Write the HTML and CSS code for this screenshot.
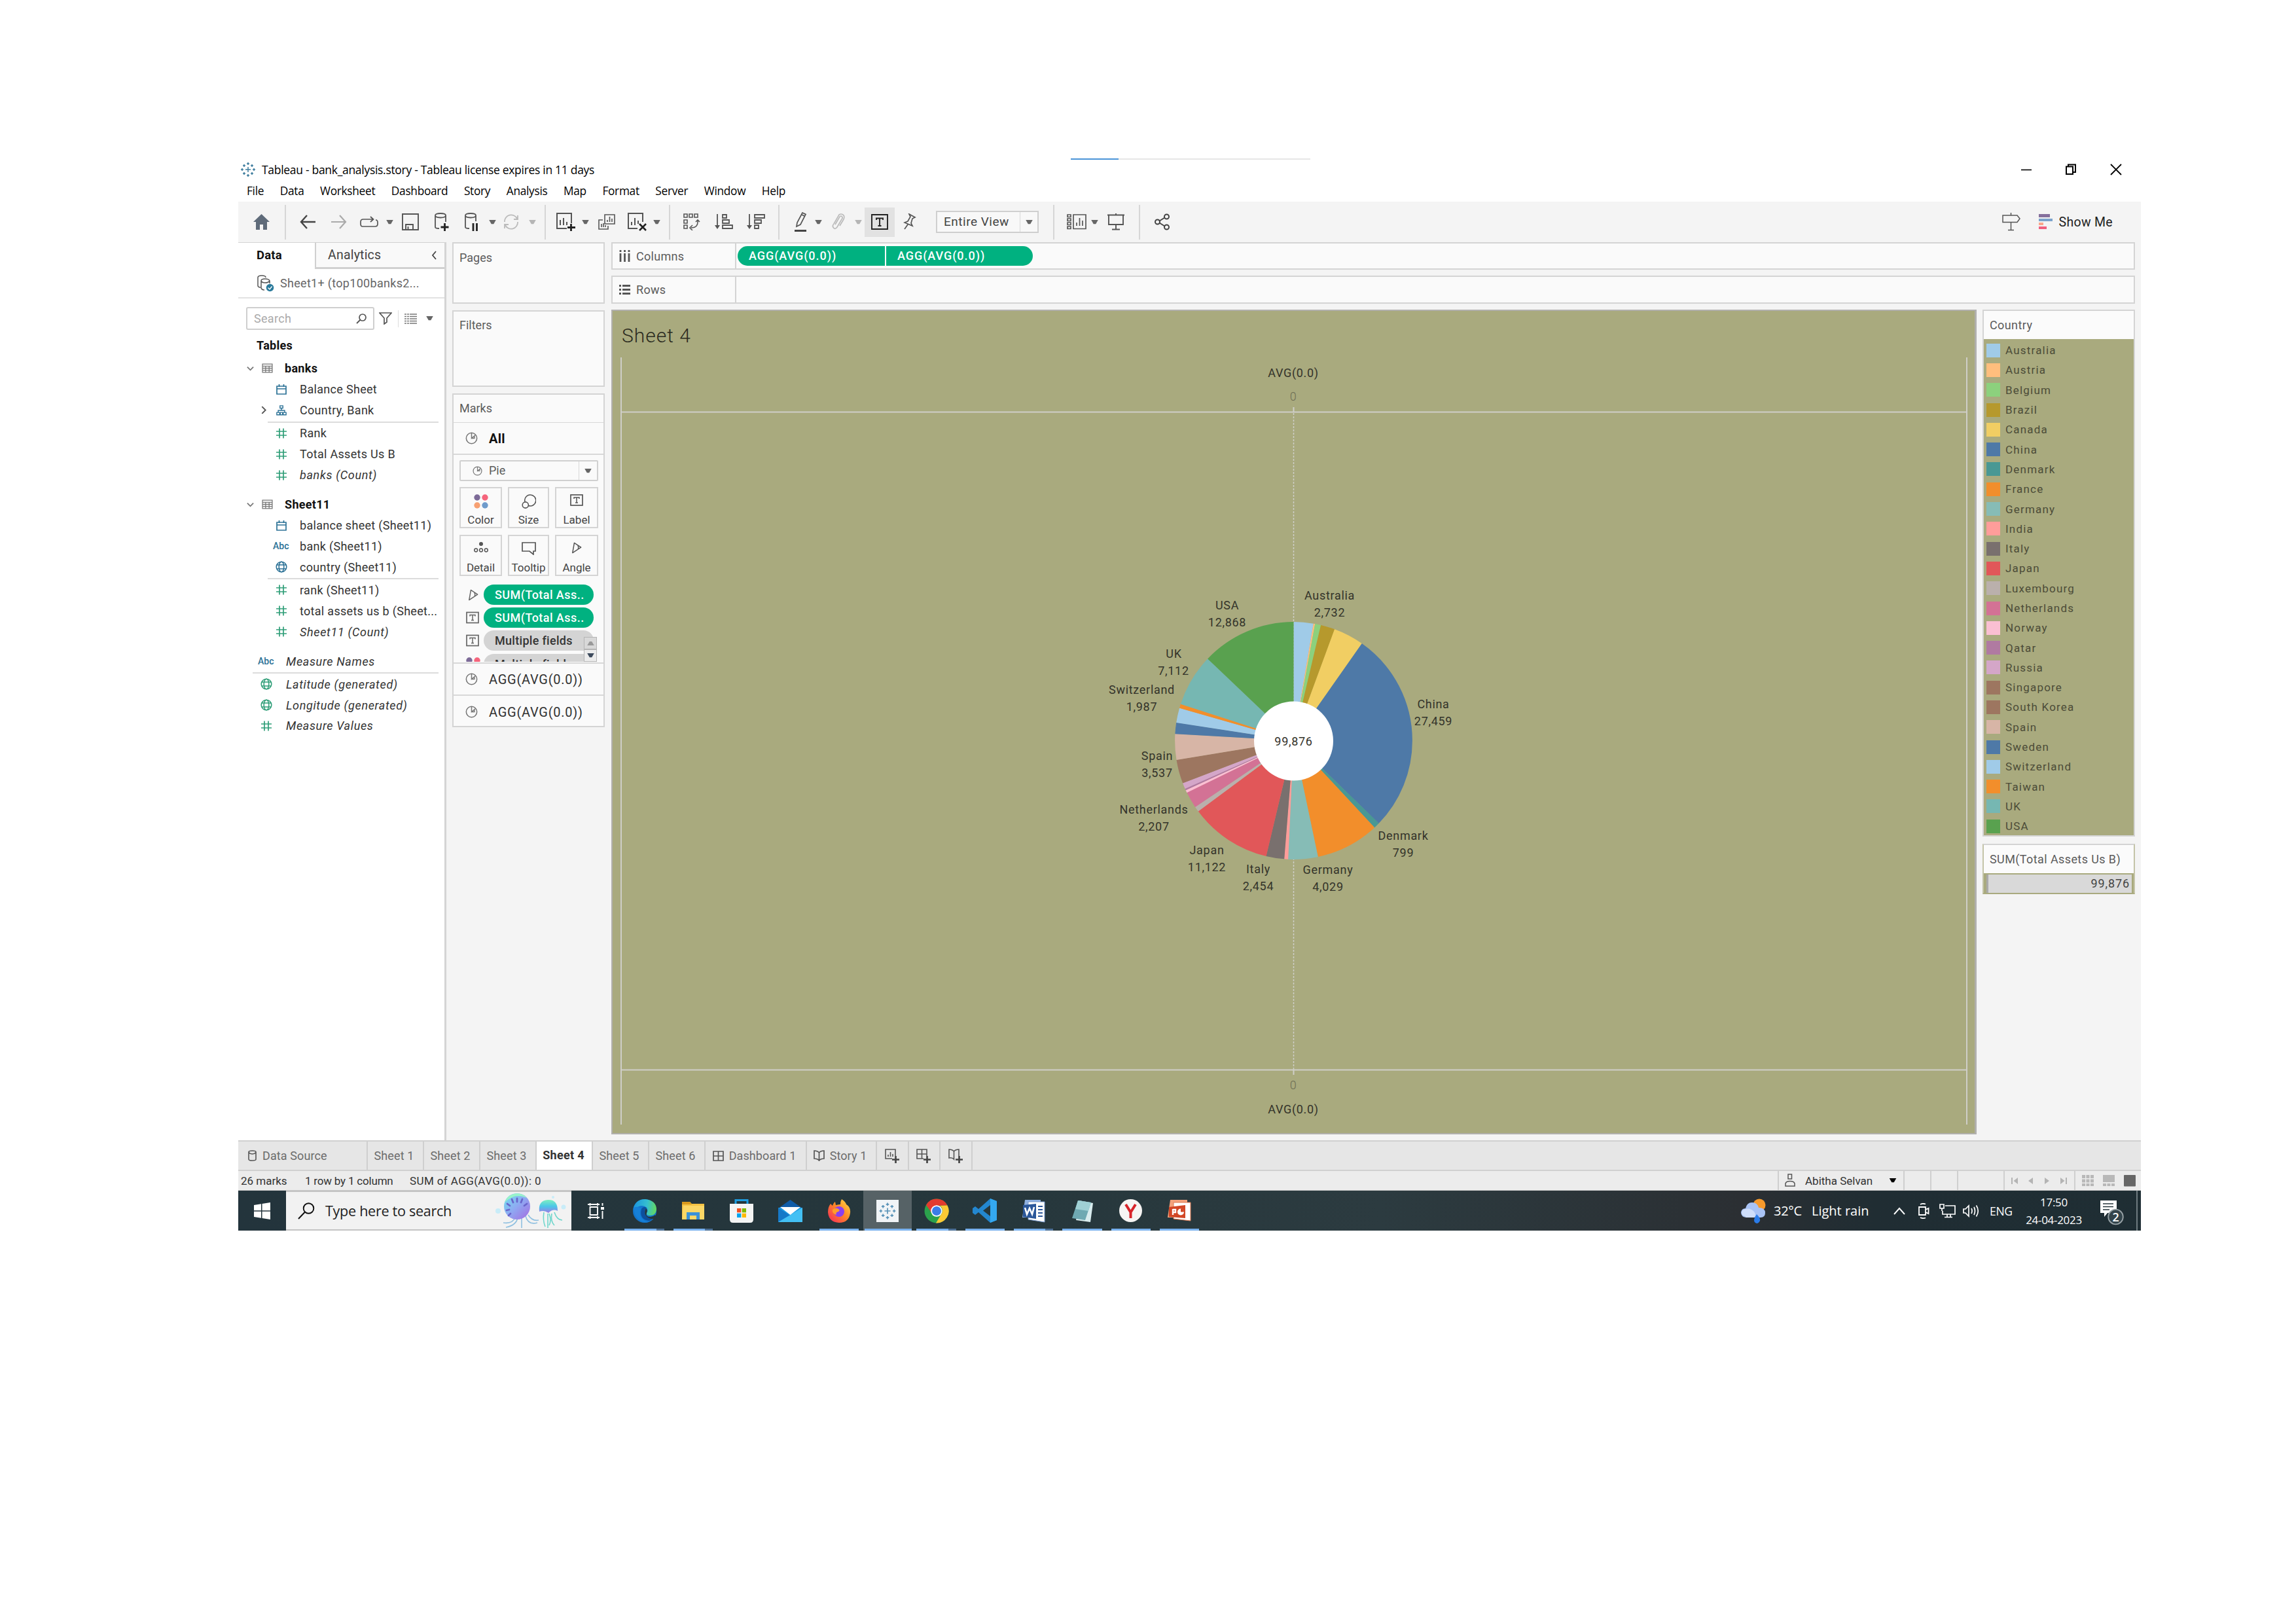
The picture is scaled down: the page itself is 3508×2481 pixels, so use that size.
FILE: index.html
```html
<!DOCTYPE html>
<html lang="en">
<head>
<meta charset="utf-8">
<title>Tableau - bank_analysis.story</title>
<link rel="stylesheet" href="styles.css">
</head>
<body>
<svg class="defs" width="0" height="0">
  <symbol id="caret" viewBox="0 0 12 8"><path d="M0 0H12L8 7H4Z" fill="currentColor"/></symbol>
  <symbol id="pie" viewBox="0 0 20 20"><g fill="none" stroke="currentColor" stroke-width="1.600"><circle cx="10" cy="10" r="8.600"/><path d="M10 1.500V10L16 5M10 10H14.500V6.500"/></g></symbol>
  <symbol id="tbox" viewBox="0 0 20 18"><rect x="1" y="1" width="18" height="16" fill="none" stroke="currentColor" stroke-width="1.700"/><path d="M6 7V5H14V7M10 5V13M8 13H12" fill="none" stroke="currentColor" stroke-width="1.500"/></symbol>
  <symbol id="hash" viewBox="0 0 16 16"><path d="M5 0.500V15.500M11 0.500V15.500M0 5H16M0 11H16" fill="none" stroke="currentColor" stroke-width="1.700"/></symbol>
  <symbol id="cal" viewBox="0 0 16 16"><path d="M1 3H15V15H1ZM1 7H15M4.500 0V4M11.500 0V4" fill="none" stroke="currentColor" stroke-width="1.700"/></symbol>
  <symbol id="globe" viewBox="0 0 18 18"><g fill="none" stroke="currentColor" stroke-width="1.600"><circle cx="9" cy="9" r="7.800"/><ellipse cx="9" cy="9" rx="3.800" ry="7.800"/><path d="M1.500 6H16.500M1.500 12H16.500"/></g></symbol>
  <symbol id="angle" viewBox="0 0 18 20"><path d="M5 1.500L16.500 9L2 18.500Z M11 5.500Q13 9 11.500 12.500" fill="none" stroke="currentColor" stroke-width="1.700" stroke-linejoin="round"/></symbol>
  <symbol id="table" viewBox="0 0 16 14"><path d="M1 1H15V13H1ZM1 4H15M1 7H15M1 10H15M5.500 4V13M10.500 4V13" fill="none" stroke="currentColor" stroke-width="1.200"/></symbol>
  <symbol id="down" viewBox="0 0 12 8"><path d="M1 1.500L6 6.500L11 1.500" fill="none" stroke="currentColor" stroke-width="2"/></symbol>
  <symbol id="plus" viewBox="0 0 10 10"><path d="M5 0V10M0 5H10" stroke="#444" stroke-width="2.400"/></symbol>
  <symbol id="logo" viewBox="0 0 24 24"><path d="M12 8V16M8 12H16M12 1V5M10 3H14M12 19V23M10 21H14M1 12H5M3 10V14M19 12H23M21 10V14M6 4V8M4 6H8M18 4V8M16 6H20M6 16V20M4 18H8M18 16V20M16 18H20" stroke="currentColor" stroke-width="1.500" fill="none"/></symbol>
</svg>
<div class="screen">
  <header class="titlebar">
    <div class="progress"><i></i></div>
    <div class="titlerow">
      <svg class="appicon" viewBox="0 0 24 24"><use href="#logo"/></svg>
      <span class="apptitle">Tableau - bank_analysis.story - Tableau license expires in 11 days</span>
      <svg class="winbtns" viewBox="0 0 154 18"><path d="M0 9.500H16" stroke="#000" stroke-width="1.600"/><path d="M69 4.500H79V16H69ZM72 4V1.500H83V13H79.500" fill="none" stroke="#000" stroke-width="2"/><path d="M137 1L153 17M153 1L137 17" stroke="#000" stroke-width="1.800"/></svg>
    </div>
    <nav class="menu"><span>File</span><span>Data</span><span>Worksheet</span><span>Dashboard</span><span>Story</span><span>Analysis</span><span>Map</span><span>Format</span><span>Server</span><span>Window</span><span>Help</span></nav>
  </header>

  <div class="toolbar">
    <div class="tg tg-home"><svg width="25" height="24" viewBox="0 0 25 24"><path d="M12.500 0L25 12H21V24H15V16H10V24H4V12H0Z" fill="#5f6b7a"/></svg></div>
    <div class="tg tg-nav">
      <svg width="24" height="22" viewBox="0 0 24 22"><path d="M24 11H2M11 1L2 11L11 21" fill="none" stroke="#444" stroke-width="2.400"/></svg>
      <svg width="24" height="22" viewBox="0 0 24 22"><path d="M0 11H22M13 1L22 11L13 21" fill="none" stroke="#aaa" stroke-width="2.200"/></svg>
      <svg width="28" height="18" viewBox="0 0 28 18"><path d="M8 16H4Q1 16 1 12V9Q1 5 5 5H20M16 1L20.500 5L16 9M24 6Q27 6 27 10V12Q27 16 23 16H8" fill="none" stroke="#555" stroke-width="1.700"/></svg>
      <svg class="caret"><use href="#caret"/></svg>
      <svg width="26" height="26" viewBox="0 0 26 26"><path d="M1 1H25V25H1ZM6 25V17H17V25M9.500 25V20" fill="none" stroke="#555" stroke-width="1.900"/></svg>
      <svg width="24" height="28" viewBox="0 0 24 28"><path d="M2 4Q2 1 10 1T18 4V14M2 4V22Q2 24 8 24M2 4Q2 7.500 10 7.500T18 4" fill="none" stroke="#555" stroke-width="1.800"/><path d="M16.500 16V28M10.500 22H22.500" stroke="#222" stroke-width="2.800"/></svg>
      <svg width="24" height="28" viewBox="0 0 24 28"><path d="M2 4Q2 1 10 1T18 4V13M2 4V22Q2 24 8 24M2 4Q2 7.500 10 7.500T18 4" fill="none" stroke="#555" stroke-width="1.800"/><path d="M14 16V28M19.500 16V28" stroke="#222" stroke-width="2.800"/></svg>
      <svg class="caret"><use href="#caret"/></svg>
      <svg width="26" height="24" viewBox="0 0 26 24"><path d="M3 12A10 10 0 0 1 22 7M23 12A10 10 0 0 1 4 17M23 2V8H17M3 22V16H9" fill="none" stroke="#bbb" stroke-width="1.800"/></svg>
      <svg class="caret dim"><use href="#caret"/></svg>
    </div>
    <div class="tg tg-sheet">
      <svg width="29" height="28" viewBox="0 0 29 28"><path d="M16 24H1V1H23V16M6 19V11M11 19V8M16 19V14" fill="none" stroke="#555" stroke-width="2"/><path d="M22.500 17V28M17 22.500H29" stroke="#222" stroke-width="2.800"/></svg>
      <svg class="caret"><use href="#caret"/></svg>
      <svg width="26" height="24" viewBox="0 0 26 24"><path d="M10 1H25V15H10ZM7 9H1V23H15V18M14 12V9M17.500 12V4M21 12V7M5 20V15M8 20V14M11 20V17" fill="none" stroke="#555" stroke-width="1.600"/></svg>
      <svg width="29" height="28" viewBox="0 0 29 28"><path d="M15 24H1V1H23V14M6 19V14M11 19V8M16 17V12" fill="none" stroke="#555" stroke-width="2"/><path d="M18 17L28 27M28 17L18 27" stroke="#222" stroke-width="2.600"/></svg>
      <svg class="caret"><use href="#caret"/></svg>
    </div>
    <div class="tg tg-sort">
      <svg width="26" height="26" viewBox="0 0 26 26"><path d="M1 1H6V6H1ZM9 1H14V6H9ZM17 1H22V6H17ZM1 10H6V15H1ZM1 18H6V23H1ZM22 11Q23 22 12 22M19 13L22 10L25 13M14 18L10 22L14 26" fill="none" stroke="#555" stroke-width="1.600"/></svg>
      <svg width="28" height="24" viewBox="0 0 28 24"><path d="M4 0V20M12 1H18V6H12ZM12 9H22V14H12ZM12 17H27V22H12Z" fill="none" stroke="#555" stroke-width="1.800"/><path d="M0 17H8L4 23Z" fill="#555"/></svg>
      <svg width="28" height="24" viewBox="0 0 28 24"><path d="M4 0V20M12 1H27V6H12ZM12 9H22V14H12ZM12 17H18V22H12Z" fill="none" stroke="#555" stroke-width="1.800"/><path d="M0 17H8L4 23Z" fill="#555"/></svg>
    </div>
    <div class="tg tg-view">
      <svg width="20" height="30" viewBox="0 0 20 30"><path d="M3 22L4 16L12 1L17 3.500L9 19ZM11 4L16 6.500" fill="none" stroke="#555" stroke-width="1.700"/><path d="M0 28.500H18" stroke="#444" stroke-width="3"/></svg>
      <svg class="caret"><use href="#caret"/></svg>
      <svg width="20" height="26" viewBox="0 0 20 26"><path d="M5 17L12 5Q14 3 15.500 5T15 9L8 21Q5 25 2.500 22T3 16L11 2Q14 0 17 2T18 9L12 19" fill="none" stroke="#bbb" stroke-width="1.700"/></svg>
      <svg class="caret dim"><use href="#caret"/></svg>
      <span class="pressed"><svg width="26" height="24" viewBox="0 0 26 24"><path d="M1 1H25V23H1ZM8 9V6.500H18V9M13 6.500V18M10.500 18H15.500" fill="none" stroke="#222" stroke-width="1.900"/></svg></span>
      <svg width="20" height="26" viewBox="0 0 20 26"><path d="M9 1L18 6L14 8L12 15L14 19L2 14L7 12L11 5ZM7 17L2 24" fill="none" stroke="#555" stroke-width="1.700"/></svg>
      <span class="fit"><b>Entire View</b><i><svg class="caret"><use href="#caret"/></svg></i></span>
    </div>
    <div class="tg tg-show">
      <svg width="30" height="24" viewBox="0 0 30 24"><path d="M1 1H6V4.500H1ZM1 7H6V10.500H1ZM1 13H6V16.500H1ZM1 19H6V22.500H1ZM10 1H29V22.500H10ZM15 18V13M19.500 18V6M24 18V10" fill="none" stroke="#555" stroke-width="1.700"/></svg>
      <svg class="caret"><use href="#caret"/></svg>
      <svg width="26" height="26" viewBox="0 0 26 26"><path d="M0 2.500H26M2 3V17H24V3M13 17V24M7 24.500H19M13 0V3" fill="none" stroke="#555" stroke-width="1.900"/></svg>
    </div>
    <div class="tg tg-share"><svg width="24" height="26" viewBox="0 0 24 26"><g fill="none" stroke="#444" stroke-width="2"><circle cx="4.500" cy="13" r="3.500"/><circle cx="18.500" cy="5" r="3.500"/><circle cx="18.500" cy="21" r="3.500"/><path d="M7.500 11.500L15.500 6.500M7.500 14.500L15.500 19.500"/></g></svg></div>
    <div class="showme">
      <svg width="28" height="28" viewBox="0 0 28 28"><path d="M1 4H23L27 9L23 14.500H1ZM13.500 0V4M13.500 14.500V26.500M9 26.500H18" fill="none" stroke="#555" stroke-width="1.500"/></svg>
      <svg width="21" height="24" viewBox="0 0 21 24"><path d="M0 0H17V5H0Z" fill="#85709c"/><path d="M0 7H21V11H0Z" fill="#7ba3cc"/><path d="M0 13H7V17H0Z" fill="#fba78c"/><path d="M0 19H12V23H0Z" fill="#f0607e"/></svg>
      <span>Show Me</span>
    </div>
  </div>

  <div class="work">
    <aside class="data">
      <div class="tabs"><b>Data</b><span>Analytics<svg width="9" height="14" viewBox="0 0 9 14"><path d="M7 1L2 7L7 13" fill="none" stroke="#444" stroke-width="1.800"/></svg></span></div>
      <div class="source"><svg width="26" height="26" viewBox="0 0 26 26"><path d="M1 4Q1 1 7 1T13 4M1 4V16Q1 19 5 19M6 9Q6 6 12 6T19 9V13M6 9V20Q7 23 11 23M6 9Q7 12 12 12T19 9" fill="none" stroke="#555" stroke-width="1.500"/><circle cx="19.500" cy="19.500" r="5.800" fill="#2a7a9b"/><path d="M16.500 19.500L19 22L22.500 17.500" fill="none" stroke="#fff" stroke-width="1.400"/></svg><span>Sheet1+ (top100banks2...</span></div>
      <div class="find">
        <div class="searchbox"><span>Search</span><svg width="17" height="16" viewBox="0 0 17 16"><circle cx="10" cy="6" r="5" fill="none" stroke="#555" stroke-width="1.700"/><path d="M6.500 9.500L1 15" stroke="#555" stroke-width="1.800"/></svg></div>
        <svg width="20" height="19" viewBox="0 0 20 19"><path d="M1 1H19L12 9V15L8 18V9Z" fill="none" stroke="#555" stroke-width="1.700"/></svg>
        <i class="bar"></i>
        <svg class="viewas" width="19" height="16" viewBox="0 0 19 16"><path d="M0 1H19M0 4.500H19M0 8H19M0 11.500H19M0 15H19" stroke="#777" stroke-width="1.500" stroke-dasharray="3 1 3 1 11 0"/></svg>
        <svg class="caret"><use href="#caret"/></svg>
      </div>
      <h3>Tables</h3>
      <ul class="fields">
        <li class="table"><svg class="tw"><use href="#down"/></svg><svg class="ti"><use href="#table"/></svg><b>banks</b></li>
        <li class="dim"><svg><use href="#cal"/></svg><span>Balance Sheet</span></li>
        <li class="dim hier"><svg class="exp" viewBox="0 0 7 12"><path d="M1 1L6 6L1 11" fill="none" stroke="#555" stroke-width="1.800"/></svg><svg viewBox="0 0 18 18"><path d="M6.500 1H11.500V5H6.500ZM9 5V9M3.500 12V9H14.500V12M1 12.500H6V16.500H1ZM12 12.500H17V16.500H12ZM7 12.500H11V16.500H7Z" fill="none" stroke="currentColor" stroke-width="1.600"/></svg><span>Country, Bank</span></li>
        <li class="rule"></li>
        <li class="mea"><svg><use href="#hash"/></svg><span>Rank</span></li>
        <li class="mea"><svg><use href="#hash"/></svg><span>Total Assets Us B</span></li>
        <li class="mea"><svg><use href="#hash"/></svg><em>banks (Count)</em></li>
        <li class="table second"><svg class="tw"><use href="#down"/></svg><svg class="ti"><use href="#table"/></svg><b>Sheet11</b></li>
        <li class="dim"><svg><use href="#cal"/></svg><span>balance sheet (Sheet11)</span></li>
        <li class="dim"><i>Abc</i><span>bank (Sheet11)</span></li>
        <li class="dim"><svg class="g"><use href="#globe"/></svg><span>country (Sheet11)</span></li>
        <li class="rule"></li>
        <li class="mea"><svg><use href="#hash"/></svg><span>rank (Sheet11)</span></li>
        <li class="mea"><svg><use href="#hash"/></svg><span>total assets us b (Sheet...</span></li>
        <li class="mea"><svg><use href="#hash"/></svg><em>Sheet11 (Count)</em></li>
        <li class="dim out gap"><i>Abc</i><em>Measure Names</em></li>
        <li class="rule wide"></li>
        <li class="mea out"><svg class="g"><use href="#globe"/></svg><em>Latitude (generated)</em></li>
        <li class="mea out"><svg class="g"><use href="#globe"/></svg><em>Longitude (generated)</em></li>
        <li class="mea out"><svg><use href="#hash"/></svg><em>Measure Values</em></li>
      </ul>
    </aside>

    <div class="cards">
      <section class="card pages">Pages</section>
      <section class="card filters">Filters</section>
      <section class="card marks">
        <h4>Marks</h4>
        <div class="layer all"><svg><use href="#pie"/></svg><b>All</b></div>
        <div class="markbody">
          <div class="marktype"><svg><use href="#pie"/></svg><span>Pie</span><i><svg class="caret"><use href="#caret"/></svg></i></div>
          <div class="markbtns">
            <div><svg width="22" height="22" viewBox="0 0 22 22"><circle cx="5" cy="5" r="4.700" fill="#7d6b98"/><circle cx="17" cy="5" r="4.700" fill="#f5657c"/><circle cx="5" cy="17" r="4.700" fill="#f7a072"/><circle cx="17" cy="17" r="4.700" fill="#6f9bcb"/></svg><span>Color</span></div>
            <div><svg width="22" height="22" viewBox="0 0 22 22"><g fill="none" stroke="#555" stroke-width="1.600"><path d="M5 11.500A8.500 8.500 0 1 1 10.500 17.500"/><circle cx="5.800" cy="16.500" r="4.600"/></g></svg><span>Size</span></div>
            <div><svg width="20" height="18"><use href="#tbox"/></svg><span>Label</span></div>
            <div><svg width="22" height="16" viewBox="0 0 22 16"><circle cx="11" cy="3" r="3" fill="#555"/><g fill="none" stroke="#555" stroke-width="1.500"><circle cx="3.200" cy="12.500" r="2.400"/><circle cx="11" cy="12.500" r="2.400"/><circle cx="18.800" cy="12.500" r="2.400"/></g></svg><span>Detail</span></div>
            <div><svg width="22" height="20" viewBox="0 0 22 20"><path d="M1 1H21V14H18V19L12 14H1Z" fill="none" stroke="#555" stroke-width="1.700"/></svg><span>Tooltip</span></div>
            <div><svg width="16" height="18"><use href="#angle"/></svg><span>Angle</span></div>
          </div>
          <div class="encodings">
            <div><svg width="16" height="18"><use href="#angle"/></svg><span class="pill">SUM(Total Ass..</span></div>
            <div><svg width="20" height="19"><use href="#tbox"/></svg><span class="pill">SUM(Total Ass..</span></div>
            <div><svg width="20" height="19"><use href="#tbox"/></svg><span class="pill grey">Multiple fields</span></div>
            <div><svg width="22" height="22" viewBox="0 0 22 22"><circle cx="5" cy="5" r="4.700" fill="#7d6b98"/><circle cx="17" cy="5" r="4.700" fill="#f5657c"/></svg><span class="pill grey">Multiple fields</span></div>
            <div class="spin"><i><svg class="caret up"><use href="#caret"/></svg></i><i><svg class="caret"><use href="#caret"/></svg></i></div>
          </div>
        </div>
        <div class="layer"><svg><use href="#pie"/></svg><span>AGG(AVG(0.0))</span></div>
        <div class="layer last"><svg><use href="#pie"/></svg><span>AGG(AVG(0.0))</span></div>
      </section>
    </div>

    <main class="main">
      <div class="shelf"><label><svg width="17" height="18" viewBox="0 0 17 18"><path d="M2 0V3M8.500 0V3M15 0V3M2 5V18M8.500 5V18M15 5V18" stroke="#555" stroke-width="2.800"/></svg>Columns</label><span class="fpill l">AGG(AVG(0.0))</span><span class="fpill r">AGG(AVG(0.0))</span></div>
      <div class="shelf rows"><label><svg width="17" height="15" viewBox="0 0 17 15"><path d="M0 1.500H3M0 7.500H3M0 13.500H3M5 1.500H17M5 7.500H17M5 13.500H17" stroke="#555" stroke-width="2.800"/></svg>Rows</label></div>
      <div class="stage">
        <div class="view">
          <h2>Sheet 4</h2>
          <svg class="chart" viewBox="934 533 2086 1200" width="2086" height="1200">
            <g class="grid">
              <path d="M949 546V1718M3005 546V1718M949 629.500H3005M949 1634.500H3005"/>
              <path d="M1976.500 622V629M1976.500 1635V1642"/>
              <path class="zero" d="M1976.500 631V1634"/>
            </g>
            <g class="slices" transform="rotate(-90 1976.500 1131.500)">
              <circle pathLength="360" stroke="#a0cbe8" stroke-dasharray="9.650 360"/>
              <circle pathLength="360" stroke="#ffbe7d" stroke-dasharray=".8 360" stroke-dashoffset="-9.650"/>
              <circle pathLength="360" stroke="#8cd17d" stroke-dasharray="3 360" stroke-dashoffset="-10.400"/>
              <circle pathLength="360" stroke="#b6992d" stroke-dasharray="7 360" stroke-dashoffset="-13.300"/>
              <circle pathLength="360" stroke="#f1ce63" stroke-dasharray="15 360" stroke-dashoffset="-20.200"/>
              <circle pathLength="360" stroke="#4e79a7" stroke-dasharray="99.100 360" stroke-dashoffset="-35.100"/>
              <circle pathLength="360" stroke="#499894" stroke-dasharray="3 360" stroke-dashoffset="-134.100"/>
              <circle pathLength="360" stroke="#f28e2b" stroke-dasharray="31.200 360" stroke-dashoffset="-137"/>
              <circle pathLength="360" stroke="#86bcb6" stroke-dasharray="14.700 360" stroke-dashoffset="-168.100"/>
              <circle pathLength="360" stroke="#ff9d9a" stroke-dasharray="2 360" stroke-dashoffset="-182.700"/>
              <circle pathLength="360" stroke="#79706e" stroke-dasharray="8.900 360" stroke-dashoffset="-184.600"/>
              <circle pathLength="360" stroke="#e15759" stroke-dasharray="40.100 360" stroke-dashoffset="-193.400"/>
              <circle pathLength="360" stroke="#bab0ac" stroke-dasharray="2.700 360" stroke-dashoffset="-233.400"/>
              <circle pathLength="360" stroke="#d37295" stroke-dasharray="8.100 360" stroke-dashoffset="-236"/>
              <circle pathLength="360" stroke="#fabfd2" stroke-dasharray="1.400 360" stroke-dashoffset="-244"/>
              <circle pathLength="360" stroke="#b07aa1" stroke-dasharray=".9 360" stroke-dashoffset="-245.300"/>
              <circle pathLength="360" stroke="#d4a6c8" stroke-dasharray="3 360" stroke-dashoffset="-246.100"/>
              <circle pathLength="360" stroke="#9d7660" stroke-dasharray="11.700 360" stroke-dashoffset="-249"/>
              <circle pathLength="360" stroke="#d7b5a6" stroke-dasharray="12.800 360" stroke-dashoffset="-260.600"/>
              <circle pathLength="360" stroke="#4e79a7" stroke-dasharray="5.600 360" stroke-dashoffset="-273.300"/>
              <circle pathLength="360" stroke="#a0cbe8" stroke-dasharray="7.300 360" stroke-dashoffset="-278.800"/>
              <circle pathLength="360" stroke="#f28e2b" stroke-dasharray="2.100 360" stroke-dashoffset="-286"/>
              <circle pathLength="360" stroke="#76b7b2" stroke-dasharray="25.700 360" stroke-dashoffset="-288"/>
              <circle pathLength="360" stroke="#59a14f" stroke-dasharray="46.400 360" stroke-dashoffset="-313.600"/>
            </g>
            <circle class="hole" cx="1976.500" cy="1132" r="60.500"/>
            <g class="labels">
              <text x="1976" y="575.500">AVG(0.0)</text><text x="1976" y="612" class="tick">0</text>
              <text x="1976" y="1664" class="tick">0</text><text x="1976" y="1700.500">AVG(0.0)</text>
              <text x="1976.500" y="1138.500">99,876</text>
              <text x="2031.500" y="916">Australia</text><text x="2031.500" y="941.500">2,732</text>
              <text x="1875" y="931">USA</text><text x="1875" y="956.500">12,868</text>
              <text x="1793.500" y="1005">UK</text><text x="1793" y="1030.500">7,112</text>
              <text x="1744.500" y="1060">Switzerland</text><text x="1744.500" y="1085.500">1,987</text>
              <text x="1768" y="1161">Spain</text><text x="1768" y="1187">3,537</text>
              <text x="1763" y="1243">Netherlands</text><text x="1763" y="1268.500">2,207</text>
              <text x="1844" y="1305">Japan</text><text x="1844" y="1330.500">11,122</text>
              <text x="1922.500" y="1334">Italy</text><text x="1922.500" y="1360">2,454</text>
              <text x="2029" y="1335">Germany</text><text x="2029" y="1361">4,029</text>
              <text x="2144" y="1282.500">Denmark</text><text x="2144" y="1308.500">799</text>
              <text x="2190" y="1082">China</text><text x="2190" y="1108">27,459</text>
            </g>
          </svg>
        </div>
        <div class="legends">
          <section class="legend">
            <h5>Country</h5>
            <ul>
              <li><i class="c1"></i>Australia</li><li><i class="c2"></i>Austria</li><li><i class="c3"></i>Belgium</li><li><i class="c4"></i>Brazil</li><li><i class="c5"></i>Canada</li><li><i class="c6"></i>China</li><li><i class="c7"></i>Denmark</li><li><i class="c8"></i>France</li><li><i class="c9"></i>Germany</li><li><i class="c10"></i>India</li><li><i class="c11"></i>Italy</li><li><i class="c12"></i>Japan</li><li><i class="c13"></i>Luxembourg</li><li><i class="c14"></i>Netherlands</li><li><i class="c15"></i>Norway</li><li><i class="c16"></i>Qatar</li><li><i class="c17"></i>Russia</li><li><i class="c18"></i>Singapore</li><li><i class="c18"></i>South Korea</li><li><i class="c19"></i>Spain</li><li><i class="c6"></i>Sweden</li><li><i class="c1"></i>Switzerland</li><li><i class="c8"></i>Taiwan</li><li><i class="c20"></i>UK</li><li><i class="c21"></i>USA</li>
            </ul>
          </section>
          <section class="sizelegend"><h5>SUM(Total Assets Us B)</h5><div><span>99,876</span></div></section>
        </div>
      </div>
    </main>
  </div>

  <div class="sheets">
    <span class="ds"><svg width="13" height="17" viewBox="0 0 13 17"><path d="M1 3Q1 1 6.500 1T12 3V14Q12 16 6.500 16T1 14ZM1 3.500Q3 6 6.500 6T12 3.500" fill="none" stroke="#555" stroke-width="1.600"/></svg>Data Source</span>
    <span>Sheet 1</span><span>Sheet 2</span><span>Sheet 3</span><b>Sheet 4</b><span>Sheet 5</span><span>Sheet 6</span>
    <span class="db"><svg width="17" height="16" viewBox="0 0 17 16"><path d="M1 1H16V15H1ZM8.500 1V15M1 8H16" fill="none" stroke="#555" stroke-width="1.700"/></svg>Dashboard 1</span>
    <span class="st"><svg width="17" height="17" viewBox="0 0 17 17"><path d="M1 1Q6 1 8.500 4Q11 1 16 1V13Q11 13 8.500 16Q6 13 1 13ZM8.500 4V15" fill="none" stroke="#555" stroke-width="1.700"/></svg>Story 1</span>
    <span class="nw"><svg width="23" height="22" viewBox="0 0 23 22"><path d="M11 15H1V1H16V11M5 12V9M8.500 12V5M12 12V8" fill="none" stroke="#555" stroke-width="1.600"/><use href="#plus" x="11" y="11" width="11" height="11"/></svg></span>
    <span class="nw"><svg width="23" height="22" viewBox="0 0 23 22"><path d="M11 15H1V1H16V11M8.500 1V15M1 8H16" fill="none" stroke="#555" stroke-width="1.600"/><use href="#plus" x="11" y="11" width="11" height="11"/></svg></span>
    <span class="nw"><svg width="23" height="22" viewBox="0 0 23 22"><path d="M16 11V1Q11 1 8.500 4Q6 1 1 1V14Q6 13 8.500 16V4" fill="none" stroke="#555" stroke-width="1.600"/><use href="#plus" x="11" y="11" width="11" height="11"/></svg></span>
  </div>
  <div class="status">
    <span class="s1">26 marks</span><span class="s2">1 row by 1 column</span><span class="s3">SUM of AGG(AVG(0.0)): 0</span>
    <div class="user"><svg width="16" height="21" viewBox="0 0 16 21"><path d="M5 1H10.500V8H5ZM1 19V15Q2 11.500 8 11.500T15 15V19Z" fill="none" stroke="#555" stroke-width="1.500"/></svg><span>Abitha Selvan</span><svg class="caret black"><use href="#caret"/></svg></div>
    <div class="cell"></div><div class="cell"></div><div class="cell c71"></div>
    <div class="navs"><svg width="85" height="12" viewBox="0 0 85 12"><path d="M0 1H2V11H0ZM10 1V11L3.500 6ZM33 1V11L26 6ZM51 1V11L58 6ZM75 1V11L81.500 6ZM83 1H85V11H83Z" fill="#b4b4b4"/></svg></div>
    <div class="modes"><svg width="82" height="18" viewBox="0 0 82 18"><path d="M0 0H5V5H0ZM6.500 0H11.500V5H6.500ZM13 0H18V5H13ZM0 6.500H5V11.500H0ZM6.500 6.500H11.500V11.500H6.500ZM13 6.500H18V11.500H13ZM0 13H5V17H0ZM6.500 13H11.500V17H6.500ZM13 13H18V17H13ZM32 0H50V11H32ZM32 13H37V17H32ZM38.500 13H43.500V17H38.500ZM45 13H50V17H45Z" fill="#b8b8b8"/><rect x="64" width="18" height="17.500" rx="1" fill="#666"/></svg></div>
  </div>
  <footer class="taskbar">
    <div class="start"><svg width="25" height="26" viewBox="0 0 25 26"><path d="M0 4L11 2.300V12.300H0ZM12.500 2L25 0V12.300H12.500ZM0 13.800H11V23.800L0 22ZM12.500 13.800H25V26L12.500 24Z" fill="#fff"/></svg></div>
    <div class="tsearch"><svg width="26" height="26" viewBox="0 0 26 26"><circle cx="16.500" cy="9" r="7.800" fill="none" stroke="#111" stroke-width="1.900"/><path d="M11 14.500L1 25" stroke="#111" stroke-width="2"/></svg><span>Type here to search</span>
      <svg class="jelly" width="112" height="56" viewBox="0 0 112 56"><defs><linearGradient id="j1" x1="0" y1="0" x2="1" y2="1"><stop offset="0" stop-color="#6fe6ee"/><stop offset=".5" stop-color="#8fa8f2"/><stop offset="1" stop-color="#a56be0"/></linearGradient><linearGradient id="j2" x1="0" y1="0" x2="0" y2="1"><stop offset="0" stop-color="#7df0c0"/><stop offset=".5" stop-color="#4cc6e8"/><stop offset="1" stop-color="#9c7be6"/></linearGradient></defs>
        <path d="M30 38Q26 48 12 46M34 38Q32 50 16 53M40 38V54M46 36Q50 50 64 46M50 34Q56 44 66 42" fill="none" stroke="#8fc0e0" stroke-width="1.600"/><circle cx="33" cy="21" r="20" fill="url(#j1)"/><path d="M14 15A20 20 0 0 1 48 8Q36 3 28 6T14 15Z" fill="#98f4c8"/><g stroke="#6a66cc" stroke-width="2.800" stroke-linecap="round"><path d="M33 14V9M27 15L25 10M39 15L41 10M22 20L18 17M44 20L48 17M21 26L17 27M23 32L20 35"/></g>
        <path d="M74 30Q72 42 76 52M80 32V54M86 32Q84 44 90 50M90 30Q94 42 102 42M82 32Q86 42 82 50" fill="none" stroke="#6fd6cc" stroke-width="1.600"/><path d="M67 29Q65 12 80 11T95 28Q88 24 81 31Q74 26 67 29Z" fill="url(#j2)"/><circle cx="4" cy="28" r="4" fill="#c8ecf8"/><circle cx="104" cy="22" r="3.500" fill="#c8ecf8"/><circle cx="88" cy="7" r="2" fill="#c8ecf8"/></svg>
    </div>
    <div class="apps">
      <div class="tv"><svg width="25" height="24" viewBox="0 0 25 24"><path d="M0 2H18M0 22H18M3.500 6H15V18H3.500ZM3.500 0V4M15 0V4M3.500 20V24M15 20V24M22.500 0V4M22.500 12V24" fill="none" stroke="#fff" stroke-width="1.900"/><path d="M20 6H25V10H20Z" fill="#fff"/></svg></div>
      <div class="on more"><svg width="38" height="38" viewBox="0 0 38 38"><defs><linearGradient id="e1" x1="0" y1=".2" x2="1" y2=".3"><stop offset="0" stop-color="#1a93e0"/><stop offset=".6" stop-color="#35bfd0"/><stop offset="1" stop-color="#62d863"/></linearGradient></defs><circle cx="19" cy="19" r="18" fill="#1375cc"/><path d="M1.500 17Q4 1 20 1Q37 3 37 17Q36 26 27 26Q21 26 22 22Q25 18 22 14Q15 7 1.500 17Z" fill="url(#e1)"/><path d="M14 16Q10 32 26 34Q31 32 34 28Q24 32 20 25Q17 19 22 14Q17 11 14 16Z" fill="#0d4f9e"/><path d="M22 22Q20 28 28 28Q33 27 35 25L38 30L34 31Q24 32 20 25Q18 20 21 15Q24 18 22 22Z" fill="#25353b"/><path d="M2 14Q4 36 24 36.500Q8 30 13 15Q8 11 2 14Z" fill="#1680d8"/></svg></div>
      <div class="on more"><svg width="34" height="28" viewBox="0 0 34 28"><path d="M0 0H12L15 3H34V27H0Z" fill="#f5c344"/><path d="M0 0H12L15 4H0Z" fill="#d99a1e"/><path d="M2 6H34V27H0Z" fill="#fbd766"/><path d="M7 27V16H27V27H22V21H12V27Z" fill="#3b92d8"/></svg></div>
      <div><svg width="36" height="36" viewBox="0 0 36 36"><path d="M9 8V1.500H27V8" fill="none" stroke="#1d9ce0" stroke-width="3"/><path d="M0 7H36V31Q36 36 31 36H5Q0 36 0 31Z" fill="#f4f4f4"/><path d="M11 14H17.300V20.300H11Z" fill="#f25022"/><path d="M18.700 14H25V20.300H18.700Z" fill="#7fba00"/><path d="M11 21.700H17.300V28H11Z" fill="#00a4ef"/><path d="M18.700 21.700H25V28H18.700Z" fill="#ffb900"/></svg></div>
      <div><svg width="37" height="34" viewBox="0 0 37 34"><path d="M0 13L18.500 0L37 13V20H0Z" fill="#0f5ca8"/><path d="M0 12H37V34H0Z" fill="#1f9be4"/><path d="M0 12L20 25L6 34H0Z" fill="#1679c8"/><path d="M0 34L37 12V34Z" fill="#43c0f4"/><path d="M3 11H34L18.500 23Z" fill="#fff"/></svg></div>
      <div class="on"><svg width="36" height="36" viewBox="0 0 36 36"><defs><linearGradient id="f1" x1="1" y1="0" x2="0" y2="1"><stop offset="0" stop-color="#ffe04a"/><stop offset=".45" stop-color="#ff8a26"/><stop offset="1" stop-color="#f5225e"/></linearGradient></defs><path d="M22 0Q28 4 29 8Q36 12 35 21Q33 36 18 36Q2 35 1 20Q1 12 5 7L8 10Q10 5 12 4L13 9Q18 8 20 8Q20 3 22 0Z" fill="url(#f1)"/><circle cx="18" cy="19" r="8" fill="#8a3ff0"/><path d="M8 16Q13 12 17 15Q20 17 17 19Q12 20 14 24Q7 22 8 16Z" fill="#ff9c2b"/></svg></div>
      <div class="on active"><svg class="tab" width="34" height="34" viewBox="-3 -3 30 30"><rect x="-3" y="-3" width="30" height="30" fill="#f1f4f7"/><use href="#logo" width="24" height="24"/></svg></div>
      <div class="on more"><svg width="38" height="38" viewBox="0 0 38 38"><circle cx="19" cy="19" r="18.500" fill="#2ba24c"/><path d="M3 10A18.500 18.500 0 0 1 35.500 10.500L19 11A8.500 8.500 0 0 0 11.500 22Z" fill="#e33b2e"/><path d="M35.500 10.500A18.500 18.500 0 0 1 18 37.500L27 22.500A8.500 8.500 0 0 0 24 11Z" fill="#fcc934"/><circle cx="19" cy="19" r="8.700" fill="#fff"/><circle cx="19" cy="19" r="7" fill="#3b7de8"/></svg></div>
      <div class="on"><svg width="37" height="37" viewBox="0 0 37 37"><path d="M27 0L37 4V33L27 37L9 21L4 25L0 22V15L4 12L9 16ZM27 10L16 18.500L27 27Z" fill="#2387d0" fill-rule="evenodd"/><path d="M27 0L37 4V33L27 37Z" fill="#34a8f0"/></svg></div>
      <div class="on more"><svg width="35" height="36" viewBox="0 0 35 36"><path d="M4 1H28V28H0Z" fill="#8fb0e0"/><path d="M9 4H34V35L9 31Z" fill="#fff" stroke="#7a9cd0"/><path d="M1 9L21 7V30L1 27Z" fill="#2b579a"/><path d="M4 13L7 23L11 14L15 23L18 12" fill="none" stroke="#fff" stroke-width="2.600"/><path d="M24 11H31M24 16H31M24 21H31M24 26H31" stroke="#2b579a" stroke-width="2"/></svg></div>
      <div class="on"><svg width="34" height="34" viewBox="0 0 34 34"><path d="M12 1L33 5L29 34L7 31Z" fill="#d9ecee"/><path d="M10 1L30 4L21 31L1 28Z" fill="#6fa9b2"/><path d="M10 1L30 4L26 17L6 14Z" fill="#9fd0d4"/></svg></div>
      <div class="on"><svg width="35" height="35" viewBox="0 0 35 35"><circle cx="17.500" cy="17.500" r="17.500" fill="#f6f4f3"/><path d="M10 8L17.500 20L25 8M17.500 19V29" fill="none" stroke="#d8232a" stroke-width="4"/></svg></div>
      <div class="on"><svg width="36" height="36" viewBox="0 0 36 36"><path d="M4 1H30V28H0Z" fill="#f3a27c"/><path d="M9 5H35V33L9 30Z" fill="#fff" stroke="#e0784e"/><path d="M2 12L27 9V29L2 27Z" fill="#d24726"/><path d="M8 15V24M8 16H12V20H8" fill="none" stroke="#fff" stroke-width="2.400"/><circle cx="20" cy="19.500" r="5" fill="#fff"/><path d="M20 19.500V14A5 5 0 0 1 25 19.500Z" fill="#d24726"/></svg></div>
    </div>
    <div class="tray">
      <svg class="weather" width="38" height="38" viewBox="0 0 38 38"><circle cx="28" cy="10" r="9.500" fill="#f79a2c"/><path d="M8 29Q0 28 0 21Q1 15 7 15Q9 6 17 6Q25 6 27 14Q37 14 37 22Q37 29 30 29Z" fill="#a9c3f5"/><path d="M6 27Q1 26 1 21Q2 16 8 16Q14 14 20 20Q24 25 20 29H8Z" fill="#cfdefa"/><path d="M24 24Q30 30 29 34Q27 38 24 38Q20 37 20 33Q20 30 24 24Z" fill="#2a7be8"/></svg>
      <span class="temp">32°C</span><span class="rain">Light rain</span>
      <svg class="up" width="18" height="12" viewBox="0 0 18 12"><path d="M1 11L9 2L17 11" fill="none" stroke="#fff" stroke-width="1.900"/></svg>
      <svg class="meet" width="17" height="24" viewBox="0 0 17 24"><path d="M1 6H11V18H1ZM11 10L15.500 8V16L11 14M3 2Q6 0 11 1.500M3 22Q6 24 11 22.500" fill="none" stroke="#fff" stroke-width="1.800"/></svg>
      <svg class="net" width="25" height="22" viewBox="0 0 25 22"><path d="M9 3H24V16H5V11M12 16V20M17 16V20M8 20.500H20M1 1H7V7H1ZM4 7V11" fill="none" stroke="#fff" stroke-width="1.700"/></svg>
      <svg class="vol" width="25" height="20" viewBox="0 0 25 20"><path d="M1 7H4L9 2V18L4 13H1ZM13 6Q15 10 13 14M17 4Q20 10 17 16M20.500 1.500Q26 10 20.500 18.500" fill="none" stroke="#fff" stroke-width="1.700"/></svg>
      <span class="eng">ENG</span>
      <div class="clock"><span>17:50</span><span>24-04-2023</span></div>
      <div class="notif"><svg width="36" height="40" viewBox="0 0 36 40"><path d="M0 1H25V20H11L6 26V20H0Z" fill="#fff"/><path d="M4 6H20M4 10.500H20M4 15H14" stroke="#25353b" stroke-width="1.700"/><circle cx="23.500" cy="26" r="11.300" fill="#33444b" stroke="#98a2a6" stroke-width="1.800"/><text x="23.500" y="32.500">2</text></svg></div>
      <i class="peek"></i>
    </div>
  </footer>
</div>
</body>
</html>
```
FILE: styles.css
```css
* { box-sizing: border-box; }
body { margin: 0; padding: 242px 0 0 364px; width: 3508px; height: 2481px; background: #fff; font-family: Roboto, "Liberation Sans", sans-serif; font-size: 18px; color: #444; letter-spacing: .3px; }
h2, h3, h4, h5, ul { margin: 0; padding: 0; font-weight: 400; list-style: none; }
b { font-weight: 700; }
i { font-style: normal; }
svg { display: block; flex: none; }
.defs { position: absolute; }
.caret { width: 11px; height: 7px; color: #666; }
.caret.dim { color: #b5b5b5; }
.caret.black { color: #000; width: 12px; }
.caret.up { transform: rotate(180deg); color: #999; }
.screen { width: 2907px; height: 1638px; display: flex; flex-direction: column; background: #f4f4f4; overflow: hidden; }

.titlebar { height: 66px; flex: none; background: #fff; font-family: "Open Sans", sans-serif; color: #000; letter-spacing: -.3px; }
.progress { height: 2px; width: 366px; margin-left: 1272px; background: #e6e6e6; }
.progress i { display: block; width: 73px; height: 2px; background: #4a94d8; }
.titlerow { display: flex; align-items: center; height: 30px; margin-left: 3px; }
.appicon { width: 24px; height: 24px; color: #3f7e9f; }
.apptitle { margin-left: 9px; font-size: 17.500px; }
.winbtns { width: 154px; height: 18px; margin-left: auto; margin-right: 29px; }
.menu { display: flex; gap: 24.600px; margin-left: 13px; font-size: 17.300px; line-height: 34px; height: 34px; padding-top: 1px; }

.toolbar { height: 62px; flex: none; display: flex; align-items: center; }
.tg { height: 53px; display: grid; align-items: center; justify-items: center; border-right: 2px solid #d6d6d6; }
.tg-home { width: 73px; }
.tg-nav { width: 397px; padding-left: 9px; grid-template-columns: 48px 48px 43px 20px 44px 52px 40px 22px 36px 28px; }
.tg-sheet { width: 190px; padding-left: 13px; grid-template-columns: 35px 24px 41px 52px 8px; }
.tg-sort { width: 167px; padding-left: 8px; grid-template-columns: 49px 49px 49px; }
.tg-view { width: 420px; padding-left: 16px; grid-template-columns: 33px 20px 41px 20px 46px 63px 157px; }
.tg-view > svg:nth-of-type(5) { margin-right: 17px; }
.tg-show { width: 131px; padding-left: 17px; grid-template-columns: 33px 22px 43px; }
.tg-share { width: 68px; border: 0; }
.pressed { width: 46px; height: 45px; display: flex; align-items: center; justify-content: center; background: #e2e2e2; }
.fit { display: flex; align-items: stretch; width: 157px; height: 34px; border: 2px solid #cfcfcf; background: #f8f8f8; }
.fit b { flex: 1; padding-left: 10px; font-weight: 400; line-height: 30px; font-size: 19px; letter-spacing: .5px; }
.fit i { width: 27px; border-left: 1px solid #d8d8d8; display: flex; align-items: center; justify-content: center; }
.showme { margin-left: auto; margin-right: 43px; display: flex; align-items: center; font-size: 19.500px; color: #222; }
.showme svg + svg { margin: 0 10px 0 28px; }

.work { height: 1372px; flex: none; display: flex; }
.data { width: 318px; background: #fff; border-right: 3px solid #d4d4d4; }
.tabs { display: flex; height: 41px; font-size: 19.500px; line-height: 38px; letter-spacing: .2px; }
.tabs b { width: 117px; padding-left: 28px; color: #111; border-top: 1px solid #d4d4d4; font-size: 18.500px; }
.tabs span { flex: 1; display: flex; align-items: center; justify-content: space-between; padding: 0 11px 0 18px; background: #f9f9f9; border: solid #d0d0d0; border-width: 1px 0 3px 2px; }
.source { height: 45px; display: flex; align-items: center; padding-left: 29px; gap: 9px; font-size: 18px; color: #666; border-bottom: 2px solid #e2e2e2; }
.find { display: flex; align-items: center; padding: 13px 0 0 12px; height: 48px; }
.searchbox { width: 196px; height: 35px; display: flex; align-items: center; justify-content: space-between; border: 2px solid #cfcfcf; border-radius: 3px; padding: 0 9px 0 10px; margin-right: 7px; color: #aaa; }
.bar { width: 1px; height: 26px; background: #ddd; margin-left: 9px; }
.viewas { margin: 0 14px 0 9px; }
.data h3 { font-weight: 700; font-size: 18px; color: #111; padding-left: 28px; line-height: 24px; margin-top: 12px; }
.fields { margin-top: 7px; }
.fields li { height: 31.950px; display: flex; align-items: center; padding-left: 56px; }
.fields li > svg, .fields li > i { width: 20px; height: 16px; }
.fields li > svg.g { height: 18px; }
.fields li > i { display: flex; align-items: center; font-size: 14px; font-weight: 500; width: 26px; margin: 0 -3px; letter-spacing: 0; }
.fields li > span, .fields li > em { margin-left: 18px; white-space: nowrap; color: #333; }
.fields li > em { letter-spacing: .65px; }
.fields li > svg.exp { width: 8px; height: 13px; margin: 0 13px 0 -21px; }
.fields .dim { color: #2c7296; }
.fields .mea { color: #2f9e78; }
.fields .out { padding-left: 33px; }
.fields .out > em { margin-left: 20px; }
.fields .table { padding-left: 13px; color: #777; }
.fields .table.second { margin-top: 13px; }
.fields .table b { margin-left: 18px; color: #111; }
.fields .table .tw { width: 11px; height: 8px; }
.fields .table .ti { width: 17px; height: 15px; margin-left: 12px; }
.fields .rule { height: 2px; padding: 0; background: #dcdcdc; margin: 1px 9px 0 45px; }
.fields .rule.wide { margin-left: 22px; }
.fields .gap { margin-top: 13px; }

.cards { width: 252px; padding: 0 10px 0 9px; display: flex; flex-direction: column; gap: 10px; }
.card { background: #fafafa; border: 2px solid #d4d4d4; color: #5c5c5c; padding: 11px 9px; line-height: 22px; letter-spacing: 0; }
.pages { height: 94px; }
.filters { height: 117px; padding-top: 10px; }
.marks { padding: 0; height: 510px; }
.marks h4 { height: 43px; line-height: 42px; padding-left: 9px; border-bottom: 1px solid #d8d8d8; }
.layer { height: 49px; display: flex; align-items: center; padding-left: 18px; font-size: 20px; color: #333; border-bottom: 2px solid #d8d8d8; letter-spacing: .75px; }
.layer.last { border: 0; }
.layer svg { width: 19px; height: 19px; color: #777; margin-right: 17px; }
.all b { color: #111; letter-spacing: .2px; }
.markbody { padding: 8px 8px 0 9px; height: 319px; border-bottom: 2px solid #d8d8d8; }
.marktype { height: 32px; display: flex; align-items: center; border: 2px solid #d0d0d0; border-radius: 2px; padding-left: 18px; }
.marktype > svg { width: 15px; height: 15px; color: #777; }
.marktype span { margin-left: 10px; flex: 1; }
.marktype i { width: 28px; height: 100%; border-left: 1px solid #d8d8d8; display: flex; align-items: center; justify-content: center; }
.markbtns { display: grid; grid-template-columns: 65px 63px 66px; gap: 10px 9px; margin-top: 9px; }
.markbtns div { height: 63px; border: 2px solid #d4d4d4; display: flex; flex-direction: column; align-items: center; justify-content: space-between; padding-top: 9px; font-size: 17px; color: #444; }
.markbtns span { height: 21px; line-height: 20px; }
.markbtns svg { color: #555; }
.encodings { margin-top: 13px; height: 118px; overflow: hidden; position: relative; display: flex; flex-direction: column; gap: 4px; }
.encodings > div { height: 31.200px; flex: none; display: flex; align-items: center; }
.encodings svg { color: #666; margin-left: 10px; }
.encodings > div:first-child > svg { margin-left: 13px; }
.encodings > div:nth-child(4) > svg { align-self: flex-start; margin-top: 5px; }
.pill { width: 168px; height: 31px; line-height: 31px; border-radius: 16px; background: #00b180; color: #fff; padding-left: 17px; margin-left: auto; margin-right: 7px; white-space: nowrap; font-weight: 500; letter-spacing: .45px; }
.pill.grey { background: #d4d4d4; color: #333; letter-spacing: .3px; }
.encodings > .spin { position: absolute; right: 2px; bottom: 0; width: 20px; height: 38px; flex-direction: column; }
.spin i { width: 20px; height: 19px; background: #d8d8d8; border: 1.500px solid #b4b4b4; display: flex; align-items: center; justify-content: center; }
.spin i + i { background: #ececec; }
.encodings .spin svg { margin: 0; }
.spin i + i svg { color: #3c4a5c; }

.main { flex: 1; padding-right: 9px; display: flex; flex-direction: column; gap: 9px; }
.shelf { height: 42px; display: flex; align-items: center; background: #fafafa; border: 2px solid #d4d4d4; }
.shelf.rows { height: 43px; }
.shelf label { width: 189px; height: 100%; display: flex; align-items: center; padding-left: 10px; gap: 9px; color: #5c5c5c; border-right: 2px solid #d4d4d4; margin-right: 2px; }
.fpill { height: 30px; line-height: 30px; background: #00b180; color: #fff; padding-left: 17px; width: 225px; font-weight: 500; letter-spacing: .95px; }
.fpill.l { border-radius: 15px 0 0 15px; }
.fpill.r { border-radius: 0 15px 15px 0; margin-left: 2px; width: 224px; }
.stage { display: flex; gap: 9px; height: 1260px; }
.view { width: 2086px; height: 1260px; background: #a9aa7e; border: solid #b1b0ad; border-width: 2px 3px 2px 2px; }
.view h2 { height: 58px; line-height: 76px; padding-left: 14px; font-size: 30px; font-weight: 300; color: #2b2b20; letter-spacing: 1px; }
.chart { margin-left: -2px; overflow: hidden; margin-bottom: -2px; }
.grid path { stroke: #cfcec8; stroke-width: 2px; fill: none; }
.grid .zero { stroke-width: 1.500px; stroke-dasharray: 3px 2px; }
.slices circle { cx: 1976.500px; cy: 1131.500px; r: 90.700px; fill: none; stroke-width: 181.400px; }
.hole { fill: #fff; }
.labels { font-size: 18px; fill: #33332a; text-anchor: middle; letter-spacing: .7px; }
.labels .tick { fill: #6d6d54; font-weight: 300; }
.legends { width: 233px; }
.legend { height: 805px; background: #a9aa7e; border: 2px solid #d4d4d4; }
h5 { font-size: 18px; background: #fbfbfb; color: #5c5c5c; height: 43px; line-height: 44px; padding-left: 9px; letter-spacing: .4px; }
.legend ul { padding-top: 2px; }
.legend li { height: 30.300px; display: flex; align-items: center; gap: 8px; padding-left: 4px; color: #4c4c38; font-size: 17px; letter-spacing: 1.200px; }
.legend li i { width: 21px; height: 21px; }
.sizelegend { margin-top: 11px; height: 77px; background: #a9aa7e; border: 2px solid #d4d4d4; border-color: #d4d4d4 #c4c4a8 #a9aa7e; }
.sizelegend div { height: 28px; margin: 2px 3px 0 4px; background: #d9d9d9; border-left: 3px solid #aaa; text-align: right; line-height: 28px; padding-right: 3px; letter-spacing: .9px; }
.c1 { background: #a0cbe8; } .c2 { background: #ffbe7d; } .c3 { background: #8cd17d; } .c4 { background: #b6992d; } .c5 { background: #f1ce63; }
.c6 { background: #4e79a7; } .c7 { background: #499894; } .c8 { background: #f28e2b; } .c9 { background: #86bcb6; } .c10 { background: #ff9d9a; }
.c11 { background: #79706e; } .c12 { background: #e15759; } .c13 { background: #bab0ac; } .c14 { background: #d37295; } .c15 { background: #fabfd2; }
.c16 { background: #b07aa1; } .c17 { background: #d4a6c8; } .c18 { background: #9d7660; } .c19 { background: #d7b5a6; } .c20 { background: #76b7b2; } .c21 { background: #59a14f; }

.sheets { height: 47px; flex: none; display: flex; background: #e6e6e6; border-top: 2px solid #d0d0d0; border-bottom: 2px solid #d0d0d0; color: #6c6c6c; font-size: 18px; letter-spacing: .1px; }
.sheets > * { width: 86px; border-right: 2px solid #cfcfcf; display: flex; align-items: center; justify-content: center; white-space: nowrap; padding-right: 4px; }
.sheets b { background: #fff; color: #333; font-size: 18px; padding-bottom: 3px; padding-right: 2px; letter-spacing: .3px; }
.sheets .ds { width: 198px; justify-content: flex-start; padding-left: 15px; gap: 9px; }
.sheets .db { width: 155px; gap: 8px; }
.sheets .st { width: 107px; gap: 8px; }
.sheets .nw { width: 48.500px; padding-right: 0; }
.status { height: 30px; flex: none; display: flex; align-items: stretch; line-height: 30px; background: #ececec; border-bottom: 1px solid #c8c8c8; font-size: 17px; color: #333; letter-spacing: 0; }
.s1 { margin-left: 4px; width: 98px; }
.s2 { width: 160px; letter-spacing: -.2px; }
.s3 { letter-spacing: .4px; }
.user { margin-left: auto; width: 192px; display: flex; align-items: center; padding-left: 9px; border-left: 2px solid #cfcfcf; }
.user span { margin: 0 25px 0 15px; white-space: nowrap; }
.cell { width: 41px; border-left: 2px solid #cfcfcf; }
.c71 { width: 71px; }
.navs { width: 108px; border-left: 2px solid #cfcfcf; display: flex; align-items: center; padding-left: 10px; }
.modes { width: 102px; border-left: 2px solid #cfcfcf; display: flex; align-items: center; padding-left: 10px; }

.taskbar { height: 61px; flex: none; display: flex; background: linear-gradient(90deg, #23343c 0, #26373c 40%, #2c3b40 60%, #2b2f33 79%, #202d33 86%, #1f2e34 100%); font-family: "Open Sans", sans-serif; color: #fff; letter-spacing: -.3px; }
.start { width: 73px; display: flex; align-items: center; justify-content: center; }
.tsearch { width: 436px; background: #f2f2f2; border: solid #c4c4c4; border-width: 2px 0; display: flex; align-items: center; padding-left: 18px; color: #222; font-size: 21.600px; }
.tsearch span { margin-left: 16px; white-space: nowrap; }
.jelly { margin-left: auto; margin-right: 4px; }
.apps { display: flex; }
.apps > div { width: 74.350px; display: flex; align-items: center; justify-content: center; position: relative; }
.apps > .active { background: #566266; }
.apps .tab { color: #5a93b8; }
.on::after { content: ""; position: absolute; left: 7px; right: 7px; bottom: 0; height: 3px; background: #79b2ef; }
.active::after { left: 2px; right: 0; }
.more::after { background: linear-gradient(90deg, #79b2ef 80%, #4d7096 80%); }
.tray { margin-left: auto; display: flex; align-items: center; font-size: 20px; }
.tray span { white-space: nowrap; }
.temp { margin-left: 12px; width: 58px; }
.rain { width: 125px; letter-spacing: 0; }
.meet { margin-left: 20px; }
.net { margin-left: 15px; }
.vol { margin-left: 11px; }
.eng { margin-left: 16px; width: 36px; font-size: 17.500px; }
.clock { width: 94px; margin-left: 15px; display: flex; flex-direction: column; align-items: center; font-size: 17px; line-height: 27px; }
.notif { margin-left: 24px; padding-top: 6px; }
.notif text { fill: #fff; font-size: 18px; font-weight: 600; text-anchor: middle; }
.peek { width: 2px; height: 61px; background: #6e7b80; margin: 0 5px 0 19px; }
```
